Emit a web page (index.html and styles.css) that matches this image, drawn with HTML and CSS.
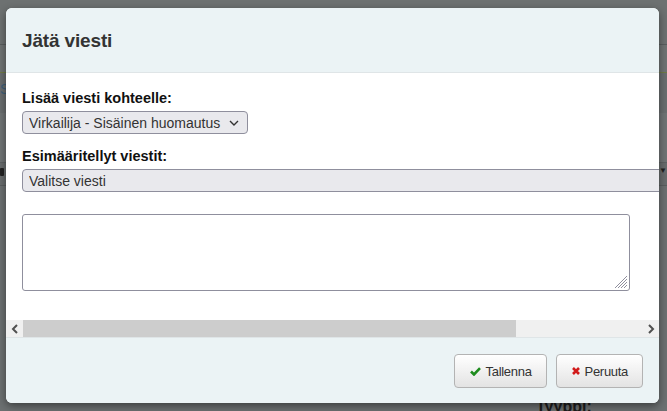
FILE: index.html
```html
<!DOCTYPE html>
<html lang="fi">
<head>
<meta charset="utf-8">
<title>Jätä viesti</title>
<link rel="stylesheet" href="styles.css">
</head>
<body>
<div class="page">
  <div class="bg-band bg-top"></div>
  <div class="bg-band bg-nav"></div>
  <div class="bg-band bg-tabs"><span class="bg-link">S</span></div>
  <div class="bg-band bg-info"></div>
  <div class="bg-band bg-row"><span class="bg-lock"></span><span class="bg-caret">▼</span></div>
  <div class="bg-band bg-content"></div>
  <div class="bg-band bg-bottom"><span class="bg-label">Tyyppi:</span></div>
</div>

<div class="modal">
  <div class="modal-header">
    <h1 class="modal-title">Jätä viesti</h1>
  </div>
  <div class="modal-body">
    <div class="body-inner">
      <label class="field-label">Lisää viesti kohteelle:</label>
      <div class="select-wrap">
        <select class="select select-target"><option>Virkailija - Sisäinen huomautus</option></select>
        <svg class="chevron" width="10" height="6" viewBox="0 0 10 6"><path d="M1 1 L5 5 L9 1" fill="none" stroke="#333" stroke-width="1.4"/></svg>
      </div>
      <label class="field-label second">Esimääritellyt viestit:</label>
      <div class="select-wrap">
        <select class="select select-wide"><option>Valitse viesti</option></select>
      </div>
      <div class="textarea-wrap">
        <textarea class="message"></textarea>
        <svg class="grip" width="14" height="14" viewBox="0 0 14 14">
          <path d="M13 1 L1 13 M13 4 L4 13 M13 7 L7 13 M13 10 L10 13" stroke="#8f8f9d" stroke-width="1"/>
        </svg>
      </div>
    </div>
  </div>
  <div class="hscroll">
    <div class="sb-btn"><svg width="8" height="10" viewBox="0 0 8 10"><path d="M6 1 L2 5 L6 9" fill="none" stroke="#505050" stroke-width="2"/></svg></div>
    <div class="sb-thumb"></div>
    <div class="sb-track"></div>
    <div class="sb-btn"><svg width="8" height="10" viewBox="0 0 8 10"><path d="M2 1 L6 5 L2 9" fill="none" stroke="#505050" stroke-width="2"/></svg></div>
  </div>
  <div class="modal-footer">
    <button class="btn"><svg class="ico" width="11" height="9" viewBox="0 0 11 9"><path d="M1 4.5 L4 7.5 L10 1.2" fill="none" stroke="#1e8c1e" stroke-width="2.6"/></svg><span>Tallenna</span></button>
    <button class="btn"><svg class="ico" width="8" height="8" viewBox="0 0 8 8"><path d="M1 1 L7 7 M7 1 L1 7" fill="none" stroke="#d11a1a" stroke-width="2.6"/></svg><span>Peruuta</span></button>
  </div>
</div>
</body>
</html>
```

FILE: styles.css
```css
html, body {
  margin: 0;
  padding: 0;
  height: 100%;
  overflow: hidden;
}
body {
  background: #6b6f70;
  font-family: "Liberation Sans", Arial, sans-serif;
  position: relative;
}

/* background page under the overlay */
.page {
  display: flex;
  flex-direction: column;
  height: 411px;
}
.bg-band { flex: none; position: relative; }
.bg-top { height: 44px; background: #6d7171; border-bottom: 1px solid #595d5e; }
.bg-nav { height: 27px; background: #6f7373; border-bottom: 1px solid #6f7a45; }
.bg-tabs { height: 40px; background: #6a6e6f; }
.bg-link { position: absolute; left: 0; top: 8px; font-size: 14px; color: #3e5f7a; }
.bg-info { height: 49px; background: #707475; }
.bg-row { height: 22px; background: #686c6d; border-top: 1px solid #5e6263; border-bottom: 1px solid #5a5e5f; }
.bg-lock { position: absolute; left: 0; top: 5px; width: 4px; height: 8px; background: #222; border-radius: 1px; }
.bg-caret { position: absolute; right: 0; top: 3px; font-size: 8px; color: #222; }
.bg-content { flex: 1; background: #6c7071; }
.bg-bottom { height: 14px; background: #6c7071; }
.bg-label { position: absolute; left: 536px; top: 1px; font-weight: bold; font-size: 16px; line-height: 18px; color: #1c1c1c; }

/* modal */
.modal {
  position: absolute;
  left: 6px;
  top: 8px;
  width: 653px;
  height: 395px;
  display: flex;
  flex-direction: column;
  background: #fff;
  border-radius: 6px;
  overflow: hidden;
  box-shadow: 0 3px 9px rgba(0, 0, 0, 0.45);
}
.modal-header {
  flex: none;
  height: 65px;
  box-sizing: border-box;
  padding: 21px 16px 0 16px;
  background: #ebf3f5;
  border-bottom: 1px solid #dfe5e7;
}
.modal-title {
  margin: 0;
  font-size: 19px;
  line-height: 23px;
  font-weight: bold;
  letter-spacing: -0.15px;
  color: #333;
}
.modal-body {
  flex: none;
  height: 247px;
  overflow: hidden;
}
.body-inner {
  padding: 17px 0 0 16px;
  width: 820px;
}
.field-label {
  display: block;
  font-size: 14.5px;
  line-height: 17px;
  font-weight: bold;
  color: #111;
  margin-bottom: 4px;
}
.field-label.second { margin-top: 14px; }
.select-wrap {
  position: relative;
  display: inline-block;
  vertical-align: top;
}
.select {
  -webkit-appearance: none;
  appearance: none;
  box-sizing: border-box;
  height: 23px;
  margin: 0;
  padding: 0 6px;
  font-family: "Liberation Sans", Arial, sans-serif;
  font-size: 14px;
  color: #333;
  background: #e9e9ed;
  border: 1px solid #8f8f9d;
  border-radius: 4px;
  display: block;
}
.select-target { width: 226px; }
.select-wide { width: 790px; }
.chevron {
  position: absolute;
  right: 9px;
  top: 9px;
  pointer-events: none;
}
.textarea-wrap {
  position: relative;
  width: 608px;
  height: 77px;
  margin-top: 22px;
}
.message {
  display: block;
  box-sizing: border-box;
  width: 608px;
  height: 77px;
  margin: 0;
  resize: none;
  border: 1px solid #8f8f9d;
  border-radius: 3px;
  background: #fff;
}
.grip {
  position: absolute;
  right: 2px;
  bottom: 2px;
}

/* horizontal scrollbar */
.hscroll {
  flex: none;
  height: 17px;
  display: flex;
  background: #f0f0f0;
}
.sb-btn {
  width: 17px;
  height: 17px;
  display: flex;
  align-items: center;
  justify-content: center;
  flex: none;
}
.sb-thumb {
  width: 493px;
  background: #cdcdcd;
  flex: none;
}
.sb-track { flex: 1; }

/* footer */
.modal-footer {
  flex: 1;
  display: flex;
  justify-content: flex-end;
  align-items: flex-start;
  gap: 9px;
  padding: 16px 16px 0 0;
  background: #ebf3f5;
  border-top: 1px solid #dfe5e7;
}
.btn {
  height: 34px;
  display: flex;
  align-items: center;
  gap: 5px;
  padding: 0 14px 0 15px;
  margin: 0;
  font-family: "Liberation Sans", Arial, sans-serif;
  font-size: 13px;
  letter-spacing: -0.3px;
  color: #333;
  background: linear-gradient(#ffffff, #e3e3e3);
  border: 1px solid #b3b3b3;
  border-radius: 4px;
  box-shadow: inset 0 1px 0 rgba(255, 255, 255, 0.6);
}
.ico { flex: none; }
```
